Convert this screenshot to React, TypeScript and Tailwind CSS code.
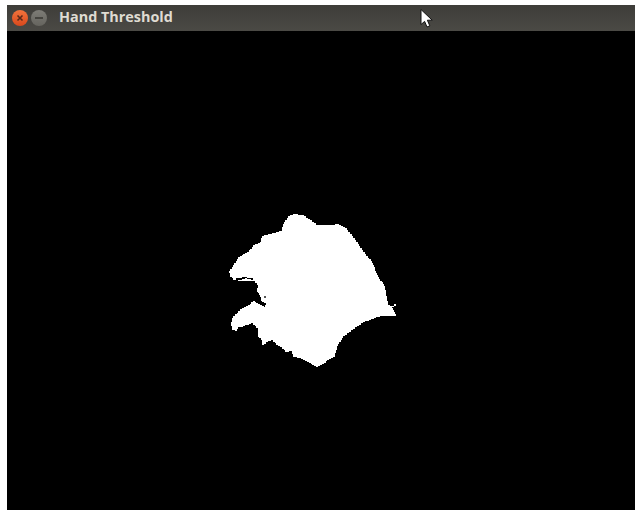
import React from "react";

// outline of the thresholded hand, clockwise from the top of the knuckles
const MASK_OUTLINE: [number, number][] = [
  [293, 214], [302, 215], [308, 219], [314, 223], [316, 225], [330, 225], [337, 224], [345, 228], [355, 240],
  [363, 252], [372, 263], [377, 275], [385, 288], [388, 305], [392, 307], [396, 304], [392, 308], [396, 316],
  [382, 316], [365, 322], [353, 330], [343, 338], [337, 348], [335, 357], [318, 367], [303, 359], [293, 356],
  [292, 351], [287, 352], [282, 347], [278, 345], [273, 340], [268, 342], [262, 347], [262, 340], [258, 335],
  [258, 328], [253, 323], [243, 327], [238, 327], [237, 331], [232, 329], [231, 322], [233, 316], [240, 309],
  [248, 305], [253, 301], [258, 304], [264, 307], [266, 303], [262, 301], [260, 295], [257, 290], [258, 285],
  [255, 281], [248, 281], [238, 281], [238, 280], [245, 278], [253, 280], [259, 283], [253, 278], [245, 277],
  [238, 278], [234, 281], [233, 278], [230, 275], [229, 271], [233, 265], [238, 257], [247, 252], [253, 245],
  [260, 242], [262, 236], [272, 233], [281, 231], [284, 222], [288, 216],
];

// threshold masks have blocky edges, so walk each segment in 2px stairs
function toStairs(points: [number, number][]) {
  const out: string[] = [];
  points.forEach(([x, y], i) => {
    const [nx, ny] = points[(i + 1) % points.length];
    const steps = Math.max(1, Math.round(Math.max(Math.abs(nx - x), Math.abs(ny - y)) / 2));
    for (let s = 0; s < steps; s++) {
      const ax = Math.round(x + ((nx - x) * s) / steps);
      const ay = Math.round(y + ((ny - y) * s) / steps);
      const bx = Math.round(x + ((nx - x) * (s + 1)) / steps);
      out.push(`${ax},${ay}`, `${bx},${ay}`);
    }
  });
  return out.join(" ");
}

function WindowButtons() {
  return (
    <div className="flex items-center gap-[3px] pl-[5px]">
      <div className="flex h-4 w-4 items-center justify-center rounded-full bg-gradient-to-b from-[#f2733c] to-[#d9481c]">
        <svg width="8" height="8" viewBox="0 0 8 8">
          <path d="M1.5 1.5 6.5 6.5M6.5 1.5 1.5 6.5" stroke="#5a2a1a" strokeWidth="1.6" />
        </svg>
      </div>
      <div className="flex h-4 w-4 items-center justify-center rounded-full bg-gradient-to-b from-[#7d7c76] to-[#65645e]">
        <div className="h-[2px] w-2 bg-[#45443f]" />
      </div>
    </div>
  );
}

function Cursor() {
  return (
    <svg className="absolute left-[419px] top-[8px]" width="15" height="21" viewBox="0 0 15 21">
      <path d="M2 1.5V16.5L5.6 13.4 8 19 10.8 17.8 8.4 12.2H13.2Z" fill="#fff" stroke="#111" strokeWidth="1" />
    </svg>
  );
}

export default function App() {
  return (
    <div className="relative h-[510px] w-[635px] overflow-hidden bg-white pl-[7px] pt-[5px]">
      <div className="flex h-[505px] flex-col bg-black">
        <header className="flex h-[26px] shrink-0 items-center bg-gradient-to-b from-[#3e3d39] to-[#4b4a45]">
          <WindowButtons />
          <span className="mb-[2px] ml-[12px] font-['Open_Sans',sans-serif] text-[14.4px] font-bold leading-none text-[#dfdbd2]">
            Hand Threshold
          </span>
        </header>
        <main className="flex-1 pl-[213px] pt-[174px]">
          <svg width="185" height="170" viewBox="220 205 185 170" shapeRendering="crispEdges">
            <polygon points={toStairs(MASK_OUTLINE)} fill="#fff" />
            <rect x="264" y="296" width="2" height="2" fill="#555" />
          </svg>
        </main>
      </div>
      <Cursor />
    </div>
  );
}
